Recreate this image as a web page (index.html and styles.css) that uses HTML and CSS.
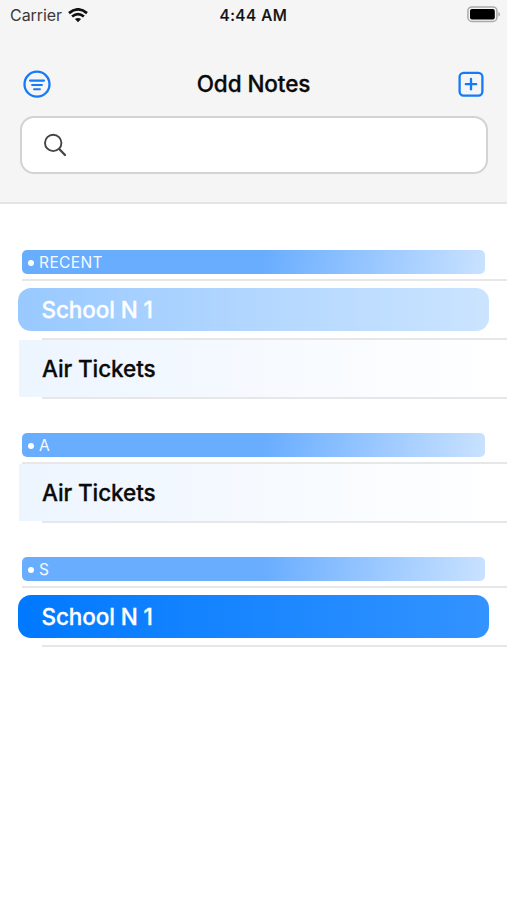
FILE: index.html
```html
<!DOCTYPE html>
<html lang="en">
<head>
<meta charset="utf-8">
<title>Odd Notes</title>
<link rel="stylesheet" href="styles.css">
</head>
<body>
<header class="top">
  <div class="status">
    <div class="carrier"><span class="carrier-name">Carrier</span>
      <svg class="wifi" width="20" height="15" viewBox="0 0 20 15" fill="none" stroke="#111" stroke-width="2.7"><path d="M1 5.1Q10-2.4 19 5.1"/><path d="M4.1 8.6Q10 3.5 15.9 8.6"/><path d="M6.9 11.1Q10 8.7 13.1 11.1L10 14.3Z" fill="#111" stroke="none"/></svg>
    </div>
    <time class="clock">4:44 AM</time>
    <svg class="battery" width="33" height="17" viewBox="0 0 33 17"><rect x=".9" y=".9" width="29" height="14.6" rx="4" fill="#f5f5f5" stroke="#aaa" stroke-width="1.5"/><rect x="3" y="3" width="24.8" height="10.4" rx="2" fill="#000"/><path d="M31.4 5.8Q33 6.5 33 8.2T31.4 10.6Z" fill="#aaa"/></svg>
  </div>
  <nav class="nav">
    <svg width="28" height="28" viewBox="0 0 28 28" fill="none" stroke="#137afa" stroke-width="2.3" stroke-linecap="round"><circle cx="14" cy="14.2" r="12.5"/><path d="M7 10.6H21M9.1 15H18.9M11.1 19.2H16.9" stroke-width="2.1"/></svg>
    <h1 class="title">Odd Notes</h1>
    <svg width="26" height="26" viewBox="0 0 26 26" fill="none" stroke="#137afa" stroke-width="2.3" stroke-linecap="round"><rect x="1.6" y="1.8" width="22.8" height="22.8" rx="4"/><path d="M13 8V18.4M7.8 13.2H18.2"/></svg>
  </nav>
  <div class="search">
    <svg width="24" height="24" viewBox="0 0 24 24" fill="none" stroke="#444" stroke-width="1.9" stroke-linecap="round"><circle cx="10.2" cy="9.9" r="8.2"/><path d="M16.2 16L22 22" stroke-width="2.3"/></svg>
  </div>
</header>
<main class="list">
  <section class="group">
    <h2 class="label"><i class="dot"></i>RECENT</h2>
    <div class="rule wide"></div>
    <div class="row"><div class="pill faded">School N 1</div></div>
    <div class="rule"></div>
    <div class="row tint">Air Tickets</div>
    <div class="rule"></div>
  </section>
  <section class="group">
    <h2 class="label"><i class="dot"></i>A</h2>
    <div class="rule wide"></div>
    <div class="row tint">Air Tickets</div>
    <div class="rule"></div>
  </section>
  <section class="group">
    <h2 class="label"><i class="dot"></i>S</h2>
    <div class="rule wide"></div>
    <div class="row"><div class="pill solid">School N 1</div></div>
    <div class="rule"></div>
  </section>
</main>
</body>
</html>
```
FILE: styles.css
```css
* { box-sizing: border-box; }
body { margin: 0; height: 900px; background: #fff; color: #0a0a0a; font-family: Inter, "Liberation Sans", sans-serif; }
svg { display: block; flex: none; }
.top { height: 204px; background: #f5f5f5; border-bottom: 2px solid #e5e5e5; }
.status { height: 30px; padding: 0 7px 0 10px; display: grid; grid-template-columns: 1fr auto 1fr; align-items: center; }
.carrier { display: flex; align-items: center; gap: 6px; }
.carrier-name { font-size: 16px; color: #3a3a3a; letter-spacing: -.05px; }
.clock { margin-right: 3px; font-size: 15.5px; font-weight: 500; color: #111; letter-spacing: .5px; -webkit-text-stroke: .2px; }
.battery { justify-self: end; margin-top: -2px; }
.nav { height: 86px; padding: 22px 23px 0; display: flex; align-items: center; justify-content: space-between; }
.title { margin: 0 2px 2px 0; font-size: 22.5px; font-weight: 500; letter-spacing: -.1px; -webkit-text-stroke: .3px; }
.search { height: 58px; margin: 0 19px 0 20px; padding-left: 21px; display: flex; align-items: center; background: #fff; border: 2px solid #d3d3d3; border-radius: 14px; }
.list { padding-top: 46px; }
.group { margin-bottom: 34px; }
.label { height: 24px; margin: 0 22px 5px; padding-left: 6px; display: flex; align-items: center; gap: 5px; border-radius: 5px; background: linear-gradient(100deg, #69adff 0%, #69adff 52%, #c9e2ff 100%); color: #f5faff; font-size: 15.5px; font-weight: 400; letter-spacing: .4px; }
.dot { width: 6px; height: 6px; margin-top: 2px; border-radius: 50%; background: #fff; }
.rule { height: 2px; margin-left: 42px; background: #e7e7e8; }
.rule.wide { margin-left: 22px; }
.row { height: 57px; padding: 7px 18px 7px; }
.row, .pill { font-size: 22.5px; font-weight: 500; letter-spacing: -.1px; -webkit-text-stroke: .3px; }
.tint { margin: 0 0 0 19px; padding: 0 0 0 23px; display: flex; align-items: center; background: linear-gradient(90deg, #edf5ff, #fff); }
.pill { height: 43px; padding: 0 0 0 23.5px; display: flex; align-items: center; border-radius: 13px; color: #fff; }
.faded { background: linear-gradient(90deg, #99c9ff, #cbe4ff); }
.solid { background: linear-gradient(90deg, #0079ff, #3393ff); }
```
